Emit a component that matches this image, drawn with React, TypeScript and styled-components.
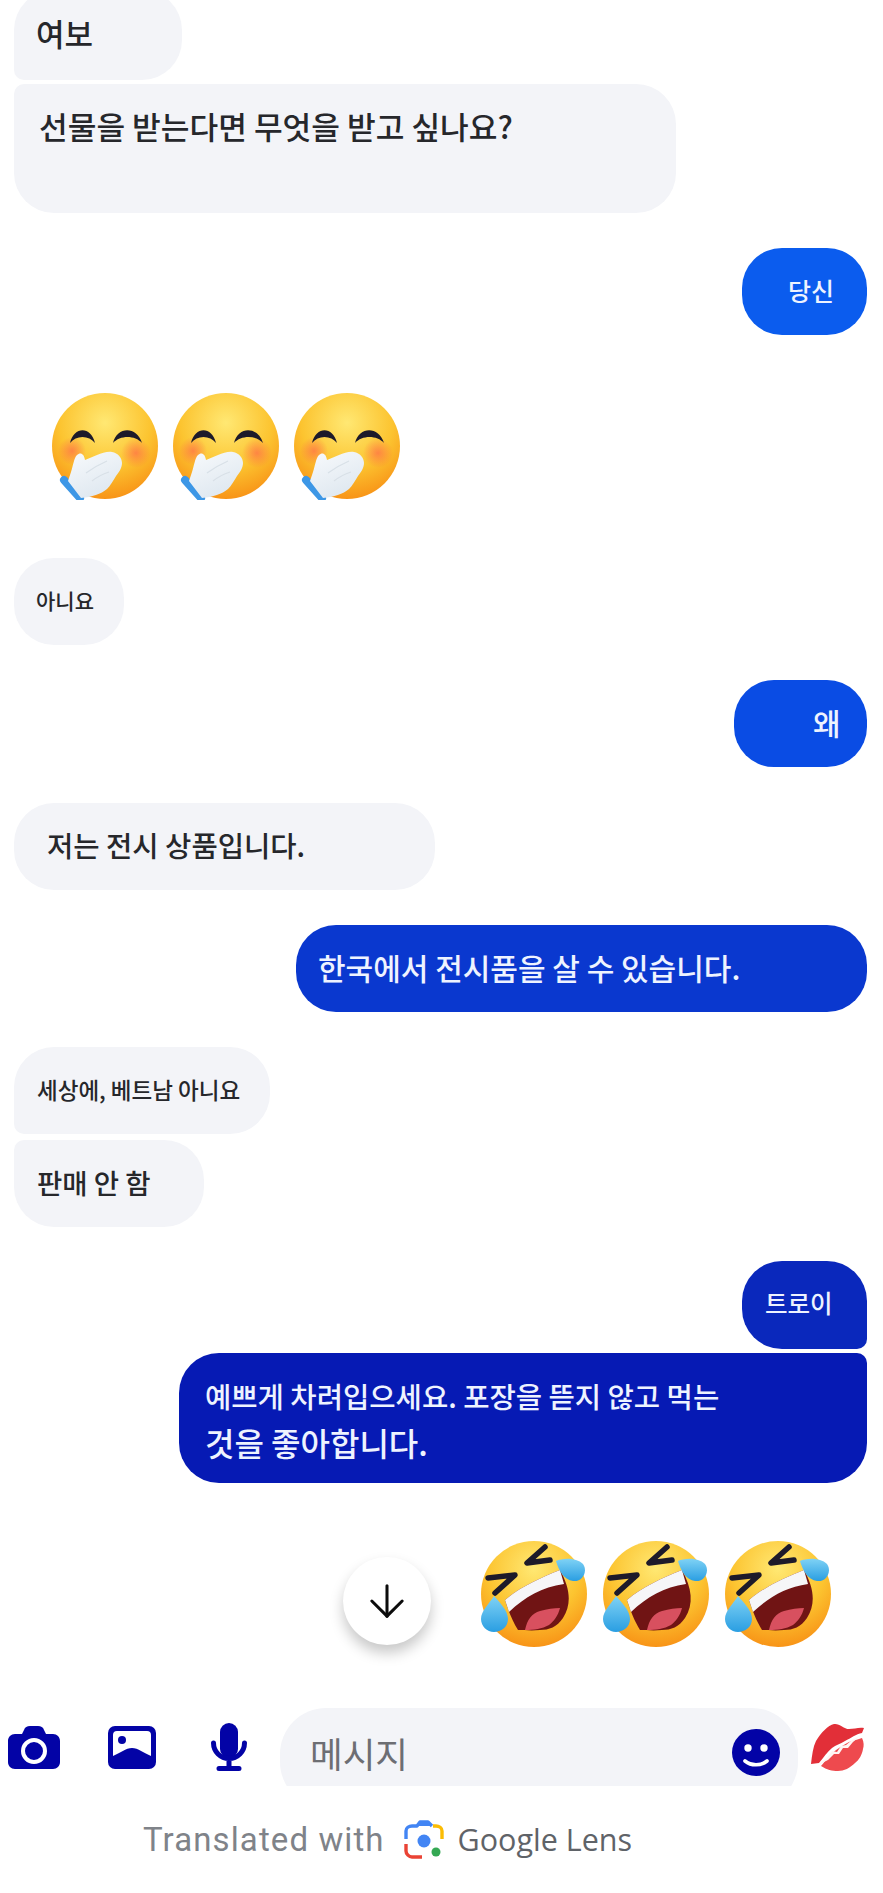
import styled, { createGlobalStyle } from 'styled-components';
import { ArrowDown } from 'lucide-react';

const GlobalStyle = createGlobalStyle`
  html, body {
    margin: 0;
    padding: 0;
    background: #ffffff;
  }
`;

const Page = styled.div`
  position: relative;
  width: 883px;
  height: 1893px;
  overflow: hidden;
  display: flex;
  flex-direction: column;
  background: #ffffff;
  font-family: "Noto Sans CJK KR", "Noto Sans", sans-serif;
`;

const Thread = styled.div`
  display: flex;
  flex-direction: column;
  padding: 0 16px 0 14px;
`;

const Row = styled.div<{ $mine?: boolean; $top: number }>`
  display: flex;
  justify-content: ${(p) => (p.$mine ? 'flex-end' : 'flex-start')};
  margin-top: ${(p) => p.$top}px;
`;

const Bubble = styled.div<{
  $bg?: string;
  $width: number;
  $height: number;
  $pad: number;
  $size: number;
  $radius?: string;
  $padTop?: number;
}>`
  box-sizing: border-box;
  width: ${(p) => p.$width}px;
  height: ${(p) => p.$height}px;
  padding: ${(p) => (p.$padTop ? `${p.$padTop}px 0 0 ${p.$pad}px` : `0 0 4px ${p.$pad}px`)};
  display: flex;
  align-items: ${(p) => (p.$padTop ? 'flex-start' : 'center')};
  background: ${(p) => p.$bg || '#f3f4f8'};
  color: ${(p) => (p.$bg ? '#eef3ff' : '#26272b')};
  border-radius: ${(p) => p.$radius || '40px'};
  font-size: ${(p) => p.$size}px;
  font-weight: 500;
  line-height: 36px;
  white-space: nowrap;
`;

const TwoLines = styled.div`
  display: flex;
  flex-direction: column;
  gap: 10px;
  margin-top: 6px;
`;

const TextLine = styled.span<{ $size: number }>`
  font-size: ${(p) => p.$size}px;
  line-height: 36px;
`;

const EmojiRow = styled.div<{ $mine?: boolean; $top: number }>`
  display: flex;
  gap: 15px;
  justify-content: ${(p) => (p.$mine ? 'flex-end' : 'flex-start')};
  margin-top: ${(p) => p.$top}px;
  padding: ${(p) => (p.$mine ? '0 36px 0 0' : '0 0 0 38px')};
`;

const ScrollButton = styled.div`
  position: absolute;
  left: 343px;
  top: 1557px;
  width: 88px;
  height: 88px;
  border-radius: 50%;
  background: #ffffff;
  display: flex;
  align-items: center;
  justify-content: center;
  color: #0c0c0c;
  box-shadow: 0 8px 14px rgba(0, 0, 0, 0.22);
`;

const Toolbar = styled.div`
  display: flex;
  align-items: center;
  height: 78px;
  margin-top: 61px;
  padding-left: 8px;
`;

const ToolIcon = styled.div<{ $left: number }>`
  display: flex;
  margin-left: ${(p) => p.$left}px;
`;

const InputClip = styled.div`
  width: 518px;
  height: 78px;
  margin-left: 32px;
  overflow: hidden;
`;

const Input = styled.div`
  box-sizing: border-box;
  height: 100px;
  padding: 21px 18px 0 30px;
  display: flex;
  align-items: flex-start;
  justify-content: space-between;
  background: #f3f4f8;
  border-radius: 46px;
  color: #6d6e73;
  font-size: 35.5px;
  line-height: 48px;
`;

const Footer = styled.div`
  display: flex;
  align-items: center;
  height: 40px;
  margin-top: 33px;
  padding-left: 143px;
  font-family: Roboto, "Noto Sans", sans-serif;
`;

const Translated = styled.span`
  color: #7f8389;
  font-size: 33px;
  font-weight: 400;
  letter-spacing: 1.1px;
`;

const LensLogo = styled.svg`
  margin: 0 14px 0 19px;
`;

const LensName = styled.span`
  color: #5f6368;
  font-family: "Open Sans", sans-serif;
  font-size: 30.5px;
`;

const BLUE = '#0303a6';

function HandEmoji() {
  return (
    <svg width={106} height={107} viewBox="0 0 106 107">
      <defs>
        <radialGradient id="faceA" cx="50%" cy="28%" r="78%">
          <stop offset="0%" stopColor="#ffe873" />
          <stop offset="55%" stopColor="#fcc430" />
          <stop offset="100%" stopColor="#f78a12" />
        </radialGradient>
        <radialGradient id="blush">
          <stop offset="0%" stopColor="#ff6a4a" stopOpacity="0.7" />
          <stop offset="100%" stopColor="#ff6a4a" stopOpacity="0" />
        </radialGradient>
        <linearGradient id="palm" x1="0" y1="0" x2="0.5" y2="1">
          <stop offset="0%" stopColor="#f8fafc" />
          <stop offset="100%" stopColor="#dfe8f0" />
        </linearGradient>
      </defs>
      <circle cx="53" cy="53" r="53" fill="url(#faceA)" />
      <circle cx="20" cy="58" r="14" fill="url(#blush)" />
      <circle cx="84" cy="60" r="15" fill="url(#blush)" />
      <path d="M18 50C22 33 39 33 43 50 37 42 24 42 18 50z" fill="#1d1a2a" />
      <path d="M61 50C65 33 85 33 90 50 83 42 68 42 61 50z" fill="#1d1a2a" />
      <path d="M12 87l16 18" stroke="#3d97e6" strokeWidth="8" strokeLinecap="round" />
      <path
        d="M19 79c2-6 3-14 6-17 3-3 7-2 8 5l12-5c5-2 11-4 15-3 6 1 10 6 10 11 0 5-3 9-6 13-3 5-6 10-9 13-6 5-15 8-26 9l-13-17z"
        fill="url(#palm)"
      />
      <path d="M34 80c7-5 14-9 21-12M40 88c5-4 11-7 17-9" stroke="#d8e0e7" strokeWidth="1.2" fill="none" />
    </svg>
  );
}

function LaughEmoji() {
  return (
    <svg width={107} height={107} viewBox="0 0 107 107">
      <defs>
        <radialGradient id="faceB" cx="50%" cy="26%" r="80%">
          <stop offset="0%" stopColor="#ffe873" />
          <stop offset="55%" stopColor="#fcc430" />
          <stop offset="100%" stopColor="#f78a12" />
        </radialGradient>
        <linearGradient id="tear" x1="0" y1="0" x2="0" y2="1">
          <stop offset="0%" stopColor="#7fd2f5" />
          <stop offset="100%" stopColor="#2a9ee2" />
        </linearGradient>
      </defs>
      <circle cx="54" cy="54" r="53" fill="url(#faceB)" />
      <path d="M25 60C40 47 60 38 80 30c10 18 12 34 3 48-6 9-14 12-23 12-9 1-16 0-22 0-5-8-10-20-13-30z" fill="#701414" />
      <path d="M25 60C40 47 60 38 80 30l4 14C62 47 45 57 29 72z" fill="#f6f6f8" />
      <path d="M45 90c2-10 7-17 15-19 7-2 14-3 20-3-2 8-6 13-11 17-7 4-15 5-24 5z" fill="#d8505f" />
      <path d="M65 7L47 23l23-3" fill="none" stroke="#1d1a2a" strokeWidth="5.5" strokeLinejoin="round" strokeLinecap="round" />
      <path d="M8 38l27-3-20 18" fill="none" stroke="#1d1a2a" strokeWidth="5.5" strokeLinejoin="round" strokeLinecap="round" />
      <path d="M76 21c6-3 20-4 27 3 5 7 0 18-10 17-9-1-14-10-17-20z" fill="url(#tear)" />
      <path d="M14 56c5 6 14 14 14 23 0 8-7 13-14 13S1 86 1 79c0-8 8-15 13-23z" fill="url(#tear)" />
    </svg>
  );
}

function CameraIcon() {
  return (
    <svg width={52} height={43} viewBox="0 0 52 43">
      <path
        d="M7 8h7l2-4c1-3 3-4 6-4h8c3 0 5 1 6 4l2 4h7c4 0 7 3 7 7v21c0 4-3 7-7 7H7c-4 0-7-3-7-7V15c0-4 3-7 7-7z"
        fill={BLUE}
      />
      <circle cx="26" cy="25" r="11" fill="none" stroke="#ffffff" strokeWidth="4" />
    </svg>
  );
}

function ImageIcon() {
  return (
    <svg width={48} height={43} viewBox="0 0 48 43">
      <rect width="48" height="43" rx="7" fill={BLUE} />
      <path d="M5 9a4 4 0 0 1 4-4h30a4 4 0 0 1 4 4v21c-7-3-13-8-19-8s-12 5-19 8z" fill="#ffffff" />
      <circle cx="14" cy="14" r="4" fill={BLUE} />
    </svg>
  );
}

function MicIcon() {
  return (
    <svg width={38} height={48} viewBox="0 0 38 48">
      <rect x="10" y="0" width="18" height="35" rx="9" fill={BLUE} />
      <path d="M3.5 20a15.5 15.5 0 0 0 31 0M19 36v9M9 45.5h20" fill="none" stroke={BLUE} strokeWidth="5" strokeLinecap="round" />
    </svg>
  );
}

function SmileIcon() {
  return (
    <svg width={48} height={47} viewBox="0 0 48 47">
      <ellipse cx="24" cy="23.5" rx="24" ry="23.5" fill={BLUE} />
      <circle cx="16" cy="19" r="3.7" fill="#ffffff" />
      <circle cx="32" cy="19" r="3.7" fill="#ffffff" />
      <path d="M13 32c6 5 16 5 22 0" fill="none" stroke="#ffffff" strokeWidth="3.6" strokeLinecap="round" />
    </svg>
  );
}

function KissEmoji() {
  return (
    <svg width={53} height={48} viewBox="0 0 53 48">
      <path d="M0 41C1 32 2 24 5 18 10 10 17 2 23 1c5-1 10 5 15 5 5 0 10-2 15-1l-2 5c-6 1-11 5-17 8-5 3-9 4-13 7-5 4-8 9-13 15z" fill="#e22f38" />
      <path d="M10 43c5-6 11-14 18-18 5-3 9-6 13-7 4-1 7-2 10-3 2 4 2 8 1 11-1 6-4 11-8 14-5 5-11 8-17 8-6 0-11-1-17-5z" fill="#ee4a4e" />
      <path
        d="M7 42l9-7 5-7 5 1 4-6 5-1 6-5 8-4-7 6-5 6-5 0-4 6-5 0-6 6z"
        fill="#fff4f2"
      />
    </svg>
  );
}

function LensIcon() {
  return (
    <LensLogo width={40} height={40} viewBox="0 0 40 40" fill="none">
      <path d="M2 20v-8c0-3 3-5 6-5h5l3-4h8l4 4" stroke="#4285f4" strokeWidth="3.4" strokeLinejoin="round" />
      <path d="M15 3h10l3 4H12z" fill="#4285f4" />
      <path d="M29 7h3c3 0 6 2 6 5v8" stroke="#fbbc04" strokeWidth="3.4" />
      <path d="M2 25v7c0 3 3 6 6 6h10" stroke="#ea4335" strokeWidth="3.4" />
      <circle cx="20" cy="22" r="6.5" fill="#4285f4" />
      <circle cx="32" cy="33" r="4.5" fill="#34a853" />
    </LensLogo>
  );
}

export default function App() {
  return (
    <Page>
      <GlobalStyle />
      <Thread>
        <Row $top={-10}>
          <Bubble $width={168} $height={90} $pad={22} $size={31} $radius="40px 40px 40px 10px">여보</Bubble>
        </Row>
        <Row $top={4}>
          <Bubble $width={662} $height={129} $pad={25} $size={31.2} $padTop={24} $radius="10px 40px 40px 40px">
            선물을 받는다면 무엇을 받고 싶나요?
          </Bubble>
        </Row>
        <Row $mine $top={35}>
          <Bubble $bg="#0b5cee" $width={125} $height={87} $pad={46} $size={25}>당신</Bubble>
        </Row>
        <EmojiRow $top={58}>
          <HandEmoji />
          <HandEmoji />
          <HandEmoji />
        </EmojiRow>
        <Row $top={58}>
          <Bubble $width={110} $height={87} $pad={22} $size={21}>아니요</Bubble>
        </Row>
        <Row $mine $top={35}>
          <Bubble $bg="#0a4ce4" $width={133} $height={87} $pad={79} $size={30}>왜</Bubble>
        </Row>
        <Row $top={36}>
          <Bubble $width={421} $height={87} $pad={33} $size={28.6}>저는 전시 상품입니다.</Bubble>
        </Row>
        <Row $mine $top={35}>
          <Bubble $bg="#0a38cf" $width={571} $height={87} $pad={22} $size={30}>한국에서 전시품을 살 수 있습니다.</Bubble>
        </Row>
        <Row $top={35}>
          <Bubble $width={256} $height={87} $pad={23} $size={22.5} $radius="40px 40px 40px 10px">세상에, 베트남 아니요</Bubble>
        </Row>
        <Row $top={6}>
          <Bubble $width={190} $height={87} $pad={23} $size={27.5} $radius="10px 40px 40px 40px">판매 안 함</Bubble>
        </Row>
        <Row $mine $top={34}>
          <Bubble $bg="#0a28bc" $width={125} $height={88} $pad={23} $size={24.5} $radius="40px 40px 10px 40px">트로이</Bubble>
        </Row>
        <Row $mine $top={4}>
          <Bubble $bg="#061ab4" $width={688} $height={130} $pad={26} $size={28} $radius="40px 10px 40px 40px">
            <TwoLines>
              <TextLine $size={28.6}>예쁘게 차려입으세요. 포장을 뜯지 않고 먹는</TextLine>
              <TextLine $size={32}>것을 좋아합니다.</TextLine>
            </TwoLines>
          </Bubble>
        </Row>
        <EmojiRow $mine $top={57}>
          <LaughEmoji />
          <LaughEmoji />
          <LaughEmoji />
        </EmojiRow>
      </Thread>
      <ScrollButton>
        <ArrowDown size={52} strokeWidth={1.4} />
      </ScrollButton>
      <Toolbar>
        <ToolIcon $left={0}><CameraIcon /></ToolIcon>
        <ToolIcon $left={48}><ImageIcon /></ToolIcon>
        <ToolIcon $left={54}><MicIcon /></ToolIcon>
        <InputClip>
          <Input>
            메시지
            <SmileIcon />
          </Input>
        </InputClip>
        <ToolIcon $left={13}><KissEmoji /></ToolIcon>
      </Toolbar>
      <Footer>
        <Translated>Translated with</Translated>
        <LensIcon />
        <LensName>Google Lens</LensName>
      </Footer>
    </Page>
  );
}
